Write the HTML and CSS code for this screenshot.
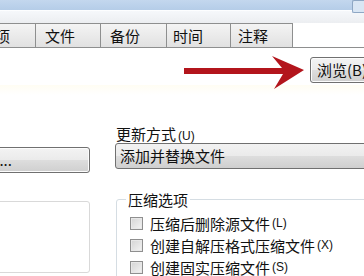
FILE: index.html
```html
<!DOCTYPE html>
<html>
<head>
  <meta charset="UTF-8">
  <title>压缩文件名和参数</title>
  <link rel="stylesheet" href="styles.css">
</head>
<body>
  <div class="dialog">
    <div class="titlebar">
      <span class="title-btn"></span>
    </div>
    <div class="strip"></div>

    <div class="tabs">
      <div class="tab first">选项</div>
      <div class="tab w65">文件</div>
      <div class="tab w66">备份</div>
      <div class="tab w64">时间</div>
      <div class="tab w62">注释</div>
    </div>

    <div class="page">
      <div class="top-row">
        <svg class="arrow" width="124" height="36" viewBox="0 0 124 36">
          <path d="M0,12 L98,12 L88,0 L120,14 L90,33 L99,18 L0,18 Z" fill="#b3151c"/>
        </svg>
        <button class="btn browse">浏览(B)...</button>
      </div>
      <div class="rule"></div>
      <div class="gap"></div>
      <div class="rule light"></div>

      <div class="columns">
        <div class="left-col">
          <button class="btn config">配置(F)...</button>
          <div class="plain-box"></div>
        </div>

        <div class="right-col">
          <label class="field-label">更新方式<span class="key">(U)</span></label>
          <div class="combo">添加并替换文件</div>

          <fieldset class="group">
            <legend>压缩选项</legend>
            <label class="check"><span class="box"></span>压缩后删除源文件<span class="key">(L)</span></label>
            <label class="check"><span class="box"></span>创建自解压格式压缩文件<span class="key">(X)</span></label>
            <label class="check"><span class="box"></span>创建固实压缩文件<span class="key">(S)</span></label>
          </fieldset>
        </div>
      </div>
    </div>
  </div>
</body>
</html>
```

FILE: styles.css
```css
body {
  margin: 0;
  width: 364px;
  height: 276px;
  overflow: hidden;
  background: #fff;
  font-family: "Noto Sans CJK SC", "Noto Sans", sans-serif;
  font-size: 15px;
  color: #111;
}

.dialog {
  width: 364px;
}

.titlebar {
  height: 10px;
  background: linear-gradient(#c3d7ee, #b5cde8);
  display: flex;
  justify-content: flex-end;
}

.title-btn {
  width: 11px;
  height: 11px;
  border: 1px solid #8ea7c4;
  border-right: none;
  border-radius: 2px 0 0 2px;
  background: #d9e6f4;
}

.strip {
  height: 13px;
  background: linear-gradient(#f6f8fb, #eceef1);
  border-top: 1px solid #fdfeff;
  box-sizing: border-box;
}

.tabs {
  display: flex;
  height: 25px;
  margin-left: -29px;
  border-bottom: 1px solid #8e8f8f;
  box-sizing: border-box;
  background: #fff;
}

.tab {
  height: 24px;
  line-height: 23px;
  box-sizing: border-box;
  padding-left: 9px;
  border: 1px solid #8e8f8f;
  border-bottom: none;
  border-left: none;
  background: linear-gradient(#f4f4f4, #e1e1e1);
  white-space: nowrap;
}

.tab.first { width: 65px; }
.tab.w65 { width: 65px; }
.tab.w66 { width: 66px; }
.tab.w64 { width: 64px; padding-left: 6px; }
.tab.w62 { width: 62px; padding-left: 7px; }

.page {
  background: #fff;
}

.top-row {
  height: 42px;
  display: flex;
  justify-content: flex-end;
  align-items: flex-start;
}

.arrow {
  margin-top: 8px;
  margin-right: 2px;
}

.btn {
  font-family: inherit;
  font-size: 15px;
  color: #111;
  border: 1px solid #707070;
  border-radius: 3px;
  background: linear-gradient(#f3f3f3 0%, #ebebeb 48%, #dddddd 52%, #cfcfcf 100%);
  box-shadow: inset 0 0 0 1px #fcfcfc;
  padding: 0;
  text-align: left;
  white-space: nowrap;
}

.browse {
  margin-top: 9px;
  margin-right: -50px;
  width: 104px;
  height: 26px;
  padding-left: 6px;
  line-height: 22px;
}

.rule {
  height: 1px;
  background: #a9bccb;
}

.rule.light {
  background: #c7d6e2;
}

.gap {
  height: 24px;
}

.columns {
  display: flex;
  padding-top: 31px;
  background: linear-gradient(#fffdf3, #ffffff 10px);
  margin-top: -31px;
}

.left-col {
  width: 150px;
  margin-left: -60px;
  display: flex;
  flex-direction: column;
}

.config {
  height: 26px;
  margin-top: 31px;
  padding-left: 10px;
  line-height: 22px;
}

.plain-box {
  margin-top: 28px;
  height: 70px;
  border: 1px solid #d9d9d9;
  border-radius: 3px;
}

.right-col {
  margin-left: 25px;
  flex: 1;
  display: flex;
  flex-direction: column;
}

.field-label {
  margin-top: 8px;
  height: 19px;
  line-height: 19px;
  margin-left: 1px;
}

.key {
  font-family: "Liberation Sans", sans-serif;
  font-size: 12px;
  margin-left: 2px;
}

.combo {
  height: 26px;
  line-height: 24px;
  margin-right: -20px;
  padding-left: 4px;
  border: 1px solid #707070;
  border-radius: 3px;
  background: linear-gradient(#f2f2f2 0%, #ebebeb 48%, #dddddd 52%, #cfcfcf 100%);
  box-sizing: border-box;
}

.group {
  margin: 22px -20px 0 1px;
  padding: 4px 0 0 13px;
  border: 1px solid #d5dde3;
  border-radius: 3px;
  min-width: 0;
}

.group legend {
  padding: 0 2px;
  margin-left: -4px;
  line-height: 17px;
}

.check {
  display: flex;
  align-items: center;
  height: 22px;
  white-space: nowrap;
}

.box {
  width: 11px;
  height: 11px;
  border: 1px solid #8f8f8f;
  background: linear-gradient(135deg, #d4d4d4, #f4f4f4);
  box-shadow: inset 0 0 0 1px #e8e8e8;
  margin-right: 7px;
  flex: none;
}
```
